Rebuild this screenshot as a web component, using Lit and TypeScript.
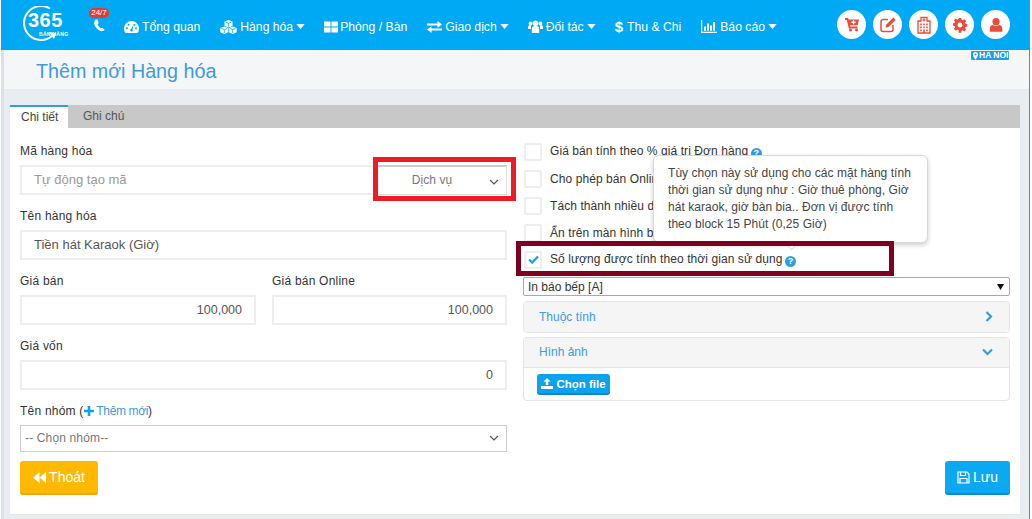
import { LitElement, html, css, svg } from "lit";
import { customElement } from "lit/decorators.js";

const ic = (w: number, h: number, vb: string, body: unknown, cls = "") =>
  html`<svg class="ic ${cls}" width=${w} height=${h} viewBox=${vb}>${body}</svg>`;

const caret = () => ic(9, 5, "0 0 10 6", svg`<path d="M0 0h10L5 6z" fill="currentColor"/>`);
const chevDown = (c = "#555") => html`<svg class="ic" width="10" height="6" viewBox="0 0 10 6"><path d="M1 1l4 4 4-4" fill="none" stroke=${c} stroke-width="1.2"/></svg>`;
const help = () => html`<span class="help">?</span>`;

const navIcons = {
  gauge: ic(15, 12, "0 0 15 12", svg`<path fill="currentColor" fill-rule="evenodd" d="M7.5 0A7.5 7.5 0 0 0 0 7.5c0 1.7.5 3.2 1.5 4.5h12c1-1.3 1.5-2.8 1.5-4.5A7.5 7.5 0 0 0 7.5 0zM3 6.2a1 1 0 1 1 0 2 1 1 0 0 1 0-2zm1.6-3.4a1 1 0 1 1 0 2 1 1 0 0 1 0-2zm5.8 0a1 1 0 1 1 0 2 1 1 0 0 1 0-2zM12 6.2a1 1 0 1 1 0 2 1 1 0 0 1 0-2zM9.6 3.6L8.5 8.2a1.3 1.3 0 1 1-1.3-.4z"/>`),
  cubes: ic(17, 14, "0 0 17 14", svg`<g fill="currentColor"><path d="M8.5 0L12.5 1.6V6L8.5 7.6 4.5 6V1.6z"/><path d="M4.3 6.4L8.2 8V12.3L4.3 14 .3 12.3V8z"/><path d="M12.7 6.4L16.7 8V12.3L12.7 14 8.8 12.3V8z"/></g><g fill="none" stroke="#00a9f4" stroke-width=".8"><path d="M5.5 2l3 1.2 3-1.2M8.5 3.2V6.5M1.3 8.4l3 1.2 3-1.2M4.3 9.6V13M9.7 8.4l3 1.2 3-1.2M12.7 9.6V13"/></g>`),
  grid: ic(14, 12, "0 0 15 12", svg`<path fill="currentColor" d="M0 0h7v5.5H0zM8 0h7v5.5H8zM0 6.5h7V12H0zM8 6.5h7V12H8z"/>`),
  swap: ic(15, 12, "0 0 15 12", svg`<path fill="currentColor" d="M0 2.4h10.5V0L15 3.4l-4.5 3.4V4.4H0zM15 7.6H4.5V5.2L0 8.6 4.5 12V9.6H15z"/>`),
  users: ic(15, 13, "0 0 15 13", svg`<g fill="currentColor"><circle cx="7.5" cy="3.2" r="2.8"/><circle cx="2.6" cy="3.4" r="1.9"/><circle cx="12.4" cy="3.4" r="1.9"/><path d="M3.8 13V9c0-2 1.3-3 2.5-3h2.4c1.2 0 2.5 1 2.5 3v4z"/><path d="M0 9V7c0-1 .7-1.7 1.7-1.7h1.8C2.7 6.3 2.9 8 2.9 9zM15 9V7c0-1-.7-1.7-1.7-1.7h-1.8c.8 1 .6 2.7.6 3.7z"/></g>`),
  chart: ic(16, 13, "0 0 16 13", svg`<path fill="currentColor" d="M0 0h1.2v11.8H16V13H0zM3 6.5h2v4.3H3zM6 3.5h2v7.3H6zM9 5.5h2v5.3H9zM12 2h2v8.8h-2z"/>`),
};

const R = "#e74c3c";
const actionIcons = [
  svg`<path d="M2 3h2.500l2 8.500h8" fill="none" stroke=${R} stroke-width="1.800"/><path d="M5 3.500h11l-1.300 5.800H6.300z" fill=${R}/><circle cx="7.500" cy="14" r="1.500" fill=${R}/><circle cx="13.500" cy="14" r="1.500" fill=${R}/><path d="M9.800 4.300h1.400v1.300h1.400v1.300h-1.400v1.300H9.800V6.900H8.400V5.600h1.400z" fill="#fff"/>`,
  svg`<path d="M9 3.500H4a2 2 0 0 0-2 2v8a2 2 0 0 0 2 2h8a2 2 0 0 0 2-2V9" fill="none" stroke=${R} stroke-width="1.500"/><path d="M6.500 11.800l.7-3L14.400 1.600l2.300 2.300-7.200 7.200z" fill=${R}/>`,
  svg`<path d="M3 5h3V1.500h6V5h3v12H3z" fill="none" stroke=${R} stroke-width="1.300"/><path d="M8.400 2.500h1.200v1h1v1.100h-1v1H8.400v-1h-1V3.500h1z" fill=${R}/><path d="M5 7.500h2v1.800H5zM8 7.500h2v1.800H8zM11 7.500h2v1.800h-2zM5 10.500h2v1.800H5zM8 10.500h2v1.800H8zM11 10.500h2v1.800h-2zM5 13.500h2v1.800H5zM8 13.500h2V17H8zM11 13.500h2v1.800h-2z" fill=${R} opacity=".8"/>`,
  svg`<g transform="translate(2 2) scale(.78)"><path fill=${R} fill-rule="evenodd" d="M7.400 0h3.200l.4 2.400 1.500.6 2-1.400 2.300 2.300-1.400 2 .6 1.500 2.400.4v3.200l-2.400.4-.6 1.500 1.400 2-2.300 2.300-2-1.400-1.500.6-.4 2.400H7.400L7 15.400l-1.500-.6-2 1.400-2.300-2.300 1.400-2-.6-1.500L0 10V6.800l2-.4.600-1.500-1.400-2L3.500.600l2 1.400L7 1.400zM9 5.700a3.200 3.200 0 1 0 0 6.400 3.200 3.200 0 0 0 0-6.400z"/></g>`,
  svg`<g transform="translate(1.500 1.500) scale(.84)"><circle cx="9" cy="5" r="4.300" fill=${R}/><path d="M1.500 17v-3.500c0-2.800 1.800-4.500 3.800-4.500 1 .9 2.300 1.400 3.700 1.400s2.700-.5 3.700-1.400c2 0 3.800 1.700 3.800 4.500V17z" fill=${R}/></g>`,
];

@customElement("app-root")
export class AppRoot extends LitElement {
  static styles = css`
    :host {
      display: block;
      position: relative;
      width: 1032px;
      height: 519px;
      overflow: hidden;
      background: #fff;
      font-family: "Liberation Sans", Arial, sans-serif;
      font-size: 12px;
      color: #333;
    }
    .ic { display: block; flex: none; }
    .shell { width: 1030px; height: 519px; box-sizing: border-box; border-right: 1px solid #3d94cf; padding-left: 1px; display: flex; flex-direction: column; }
    header {
      height: 50px; flex: none; background: #00a9f4; color: #fff;
      display: flex; align-items: center; font-size: 12.2px; position: relative;
    }
    .logo { width: 42px; height: 36px; margin-left: 22px; position: relative; flex: none; margin-top: -2px; }
    .logo svg { position: absolute; left: 0; top: 0; }
    .logo b { position: absolute; left: 5px; top: 7px; font: 700 20px/14px "Liberation Sans", sans-serif; white-space: nowrap; letter-spacing: .5px; }
    .logo i { position: absolute; left: 16px; top: 26px; font: normal 700 5px/4px "Liberation Sans", sans-serif; letter-spacing: .3px; white-space: nowrap; }
    .phone { position: relative; width: 14px; height: 14px; margin-left: 28px; margin-right: 17px; flex: none; margin-top: 2px; }
    .badge { position: absolute; left: -4px; top: -11px; width: 20px; height: 10px; border-radius: 5px; background: #e53935; font: 8px/10px "Liberation Sans", sans-serif; text-align: center; white-space: nowrap; }
    nav { display: flex; align-items: center; }
    .ni { display: flex; align-items: center; gap: 3px; white-space: nowrap; margin-right: 20px; padding-top: 3px; }
    .ni.dd { margin-right: 19px; }
    .ni.tight { gap: 2px; }
    .dollar { font-weight: 700; font-size: 15px; line-height: 14px; margin-right: 1px; }
    .acts { position: absolute; left: 836px; top: 10px; display: flex; gap: 7px; }
    .circ { width: 29px; height: 29px; border-radius: 50%; background: #fff; display: flex; align-items: center; justify-content: center; }
    .main { flex: 1; border-left: 3px solid #dbe1e8; background: #e9edf1; }
    .titlebar {
      height: 36px; padding-top: 3px; background: #f5f6f8; border-bottom: 1px solid #e6e8ea;
      padding-left: 32px; display: flex; align-items: center; position: relative;
      font-size: 19.7px; color: #3e9bdc;
    }
    .loc { position: absolute; left: 967px; top: 1px; height: 9px; padding: 0 1px 0 2px; background: #1f9fe6; color: #fff; font: 700 8.5px/9px "Liberation Sans", sans-serif; display: flex; align-items: center; gap: 1px; border-radius: 1px; }
    .wrap { margin: 15px 0 0 6px; width: 1010px; }
    .tabs { height: 23px; background: #c8c8c8; display: flex; }
    .tab { padding: 0 9px 0 10px; line-height: 23px; color: #555; }
    .tab.on { background: #fff; color: #444; width: 38px; padding-left: 11px; border-top: 2px solid #2f9fe0; line-height: 21px; height: 21px; margin-right: 5px; }
    .panel { background: #fff; height: 387px; box-sizing: border-box; padding: 15px 10px 0; display: grid; grid-template-columns: 487px 487px; column-gap: 16px; grid-template-rows: 318px auto; border-bottom: 1px solid #e2e4e6; }
    .field { margin-bottom: 13px; }
    label, .lbl { display: block; line-height: 16px; margin-bottom: 6px; color: #333; letter-spacing: .22px; }
    .input { height: 30px; box-sizing: border-box; border: 2px solid #eeeeee; display: flex; align-items: center; padding: 0 12px 1px; color: #555; font-size: 13px; position: relative; }
    .input.num { justify-content: flex-end; font-size: 12.5px; padding-bottom: 0; }
    .ph { color: #999; }
    .type { position: absolute; right: -2px; top: -2px; width: 130px; height: 30px; box-sizing: border-box; background: #fff; border: 1px solid #ddd; border-top: 2px solid #ccc; color: #777; font-size: 12px; letter-spacing: .1px; display: flex; align-items: center; justify-content: center; padding: 0 20px 2px 0; }
    .type .ic { position: absolute; right: 7px; top: 12px; }
    .two { display: grid; grid-template-columns: 236px 235px; column-gap: 16px; }
    .lnk { color: #3e9bdc; letter-spacing: -.35px; }
    .plus { display: inline-block; vertical-align: -1px; }
    .sel { height: 27px; box-sizing: border-box; border: 1px solid #ccc; display: flex; align-items: center; justify-content: space-between; padding: 0 7px 1px 4px; color: #777; letter-spacing: .15px; }
    .rows { display: flex; flex-direction: column; margin-top: -5px; }
    .chk { height: 27px; display: flex; align-items: center; gap: 8px; padding-left: 1px; white-space: nowrap; letter-spacing: .08px; }
    .box { width: 14px; height: 14px; border: 2px solid #eee; border-radius: 2px; flex: none; display: flex; align-items: center; justify-content: center; }
    .help { display: inline-block; width: 11px; height: 11px; border-radius: 50%; background: #2f9fe0; color: #fff; font: 700 9px/11px "Liberation Sans", sans-serif; text-align: center; margin-left: -1px; vertical-align: -1px; letter-spacing: 0; }
    .nsel { height: 19px; margin-top: 4px; box-sizing: border-box; border: 1px solid #a9a9a9; border-radius: 2px; display: flex; align-items: center; justify-content: space-between; padding: 0 5px 0 4px; color: #333; }
    .acc { border: 1px solid #e4e4e4; border-radius: 4px; margin-top: 5px; overflow: hidden; }
    .acc.open { margin-top: 4px; }
    .acc .hd { height: 30px; box-sizing: border-box; background: #f5f5f5; display: flex; align-items: center; justify-content: space-between; padding: 0 16px 1px 15px; color: #3e9bdc; }
    .acc.open .hd { border-bottom: 1px solid #e4e4e4; }
    .bd { padding: 6px 13px; height: 32px; box-sizing: border-box; }
    .fbtn { display: inline-flex; width: 73px; height: 21px; box-sizing: border-box; align-items: center; justify-content: center; gap: 3px; background: #0ca3ee; border-bottom: 2px solid #0a88c8; border-radius: 3px; color: #fff; font-weight: 700; font-size: 11.5px; }
    .foot { grid-column: 1 / -1; display: flex; justify-content: space-between; }
    .btn { height: 34px; box-sizing: border-box; border-radius: 3px; color: #fff; font-size: 14px; display: flex; align-items: center; justify-content: center; gap: 3px; }
    .btn.y { width: 78px; background: #ffb900; border-bottom: 2px solid #f0a800; }
    .btn.b { width: 65px; background: #0ca8f2; border-bottom: 2px solid #0a8bc8; }
    .hl { position: absolute; box-sizing: border-box; border-style: solid; border-width: 5px; pointer-events: none; }
    .hl.r { left: 373px; top: 157px; width: 143px; height: 44px; border-color: #ed1c24; }
    .hl.m { left: 516px; top: 241px; width: 378px; height: 35px; border-color: #7d0020; z-index: 4; }
    .tip { position: absolute; left: 653px; top: 155px; width: 275px; height: 88px; box-sizing: border-box; background: #fff; border: 1px solid #d8d8d8; border-radius: 6px; box-shadow: 0 2px 5px rgba(0,0,0,.2); padding: 9px 14px; line-height: 17px; color: #444; letter-spacing: .05px; z-index: 3; white-space: nowrap; }
    .tip::after { content: ""; position: absolute; left: 132px; bottom: -6px; width: 10px; height: 10px; background: #fff; border-right: 1px solid #ddd; border-bottom: 1px solid #ddd; transform: rotate(45deg); }
  `;

  render() {
    const rowsTop = [
      html`Giá bán tính theo % giá trị Đơn hàng ${help()}`,
      html`Cho phép bán Online`,
      html`Tách thành nhiều dòng`,
      html`Ẩn trên màn hình bán hàng`,
    ];
    return html`
      <div class="shell">
        <header>
          <div class="logo">
            <svg width="46" height="36" viewBox="0 0 46 36"><path d="M27 2.500A17 17 0 1 0 29 30" fill="none" stroke="#fff" stroke-width="2"/><path d="M26 26l7 1-2 6z" fill="#fff"/></svg>
            <b>365</b><i>BÁN HÀNG</i>
          </div>
          <div class="phone">
            <span class="badge">24/7</span>
            ${ic(12, 13, "0 0 12 14", svg`<path d="M2.500 .5C.5 2 .3 5 2 8s5 5.500 8 5c1.200-.2 1.800-1 2-1.800L9.500 9.300 7.800 10C6.500 9.500 4.800 7 4.500 5.500L5.700 4.500 4.500 .5z" fill="#fff"/>`)}
          </div>
          <nav>
            <div class="ni">${navIcons.gauge}Tổng quan</div>
            <div class="ni dd">${navIcons.cubes}Hàng hóa ${caret()}</div>
            <div class="ni tight">${navIcons.grid}Phòng / Bàn</div>
            <div class="ni dd">${navIcons.swap}Giao dịch ${caret()}</div>
            <div class="ni dd">${navIcons.users}Đối tác ${caret()}</div>
            <div class="ni"><span class="dollar">$</span>Thu &amp; Chi</div>
            <div class="ni">${navIcons.chart}Báo cáo ${caret()}</div>
          </nav>
          <div class="acts">
            ${actionIcons.map((a) => html`<div class="circ"><svg width="18" height="18" viewBox="0 0 18 18">${a}</svg></div>`)}
          </div>
        </header>
        <div class="main">
          <div class="titlebar">
            Thêm mới Hàng hóa
            <span class="loc">${ic(5, 8, "0 0 5 8", svg`<path fill-rule="evenodd" d="M2.500 0A2.500 2.500 0 0 0 0 2.500C0 4 2.500 8 2.500 8S5 4 5 2.500A2.500 2.500 0 0 0 2.500 0zm0 1.500a1 1 0 1 1 0 2 1 1 0 0 1 0-2z" fill="#fff"/>`)}HA NOI</span>
          </div>
          <div class="wrap">
            <div class="tabs">
              <div class="tab on">Chi tiết</div>
              <div class="tab">Ghi chú</div>
            </div>
            <div class="panel">
              <div>
                <div class="field">
                  <label>Mã hàng hóa</label>
                  <div class="input"><span class="ph">Tự động tạo mã</span>
                    <div class="type">Dịch vụ ${chevDown()}</div>
                  </div>
                </div>
                <div class="field">
                  <label>Tên hàng hóa</label>
                  <div class="input">Tiền hát Karaok (Giờ)</div>
                </div>
                <div class="two">
                  <div class="field"><label>Giá bán</label><div class="input num">100,000</div></div>
                  <div class="field"><label>Giá bán Online</label><div class="input num">100,000</div></div>
                </div>
                <div class="field">
                  <label>Giá vốn</label>
                  <div class="input num">0</div>
                </div>
                <div class="lbl">Tên nhóm (<span class="lnk">${ic(10, 10, "0 0 10 10", svg`<path fill="#0ca3ee" d="M3.700 0h2.600v3.700H10v2.600H6.300V10H3.700V6.300H0V3.700h3.700z"/>`, "plus")} Thêm mới</span>)</div>
                <div class="sel"><span>-- Chọn nhóm--</span>${chevDown()}</div>
              </div>
              <div>
                <div class="rows">
                  ${rowsTop.map((r) => html`<div class="chk"><span class="box"></span><span>${r}</span></div>`)}
                  <div class="chk"><span class="box">${ic(11, 9, "0 0 11 9", svg`<path d="M1 4.500l3.200 3L10 1.500" fill="none" stroke="#0ca3ee" stroke-width="2.200"/>`)}</span><span>Số lượng được tính theo thời gian sử dụng ${help()}</span></div>
                </div>
                <div class="nsel"><span>In báo bếp [A]</span>${ic(7, 6, "0 0 7 6", svg`<path d="M0 0h7L3.500 6z" fill="#111"/>`)}</div>
                <div class="acc">
                  <div class="hd"><span>Thuộc tính</span>${ic(8, 11, "0 0 8 11", svg`<path d="M1.500 1l4.500 4.500L1.500 10" fill="none" stroke="#2f9fe0" stroke-width="2.200"/>`)}</div>
                </div>
                <div class="acc open">
                  <div class="hd"><span>Hình ảnh</span>${ic(11, 8, "0 0 11 8", svg`<path d="M1 1.500L5.500 6 10 1.500" fill="none" stroke="#2f9fe0" stroke-width="2.200"/>`)}</div>
                  <div class="bd"><span class="fbtn">${ic(12, 11, "0 0 12 11", svg`<path fill="#fff" d="M6 0l3.500 3.500H7.300V7H4.700V3.500H2.500zM0 8h12v3H0z"/>`)}Chọn file</span></div>
                </div>
              </div>
              <div class="foot">
                <div class="btn y">${ic(13, 11, "0 0 13 11", svg`<path fill="#fff" d="M6.500 0v11L0 5.500zM13 0v11L6.500 5.500z"/>`)}Thoát</div>
                <div class="btn b">${ic(13, 13, "0 0 13 13", svg`<path fill="none" stroke="#fff" stroke-width="1.200" d="M1 1h9l2 2v9H1zM3.500 1v3.500h5V1M3 12V7.500h7V12"/>`)}Lưu</div>
              </div>
            </div>
          </div>
        </div>
      </div>
      <div class="hl r"></div>
      <div class="hl m"></div>
      <div class="tip">Tùy chọn này sử dụng cho các mặt hàng tính<br>thời gian sử dụng như : Giờ thuê phòng, Giờ<br>hát karaok, giờ bàn bia.. Đơn vị được tính<br>theo block 15 Phút (0,25 Giờ)</div>
    `;
  }
}
